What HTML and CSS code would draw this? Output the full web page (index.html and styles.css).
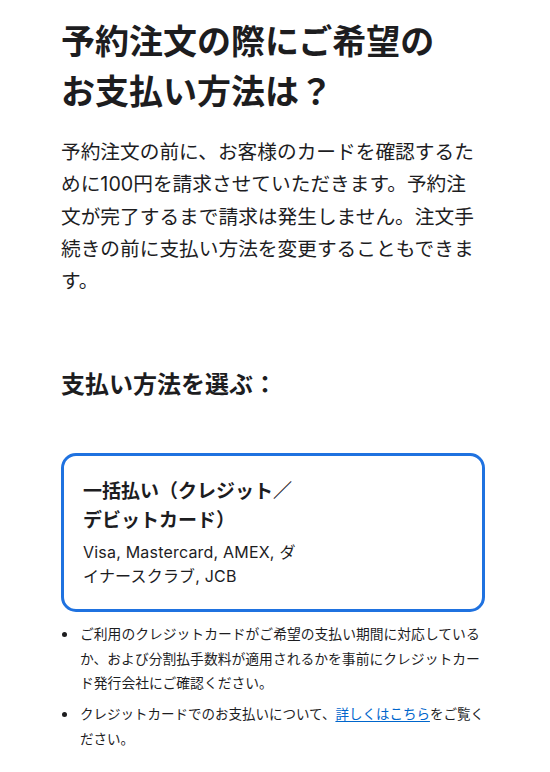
FILE: index.html
```html
<!DOCTYPE html>
<html lang="ja">
<head>
<meta charset="utf-8">
<title>お支払い方法</title>
<link rel="stylesheet" href="styles.css">
</head>
<body>
<main class="page">
  <h1 class="title">予約注文の際にご希望のお支払い方法は？</h1>
  <p class="lead">予約注文の前に、お客様のカードを確認するために100円を請求させていただきます。予約注文が完了するまで請求は発生しません。注文手続きの前に支払い方法を変更することもできます。</p>
  <h2 class="section-title">支払い方法を選ぶ：</h2>
  <div class="option">
    <div class="option-text">
      <div class="option-name">一括払い（クレジット／デビットカード）</div>
      <div class="option-desc">Visa, Mastercard, AMEX, ダイナースクラブ, JCB</div>
    </div>
  </div>
  <ul class="notes">
    <li class="note"><span class="note-text">ご利用のクレジットカードがご希望の支払い期間に対応しているか、および分割払手数料が適用されるかを事前にクレジットカード発行会社にご確認ください。</span></li>
    <li class="note note-tight"><span class="note-text">クレジットカードでのお支払いについて、<a class="link" href="#">詳しくはこちら</a>をご覧ください。</span></li>
  </ul>
</main>
</body>
</html>
```

FILE: styles.css
```css
html, body {
  margin: 0;
  padding: 0;
  background: #ffffff;
}

body {
  font-family: "Inter", "Noto Sans CJK JP", sans-serif;
  color: #1d1d1f;
}

.page {
  padding: 17px 65px 0 61px;
}

.title {
  margin: 0;
  max-width: 390px;
  font-size: 34px;
  line-height: 50px;
  font-weight: 700;
  color: #1d1d1f;
}

.lead {
  margin: 19px 0 0;
  font-size: 19.7px;
  line-height: 32.3px;
  font-weight: 400;
}

.section-title {
  margin: 70px 0 0;
  font-size: 24px;
  line-height: 36px;
  font-weight: 700;
}

.option {
  margin-top: 50px;
  border: 3px solid #1f72e0;
  border-radius: 15px;
  padding: 21px 19px 21px;
}

.option-text {
  max-width: 214px;
}

.option-name {
  font-size: 19px;
  line-height: 29px;
  font-weight: 700;
}

.option-desc {
  margin-top: 5px;
  font-size: 16px;
  line-height: 24px;
  letter-spacing: 0.2px;
  color: #1d1d1f;
}

.notes {
  list-style: none;
  margin: 10px -5px 0 0;
  padding: 0;
}

.note {
  display: flex;
  font-size: 13.8px;
  line-height: 24.5px;
}

.note + .note {
  margin-top: 6.5px;
}

.note::before {
  content: "";
  flex: 0 0 5px;
  width: 5px;
  height: 5px;
  border-radius: 50%;
  background: #1d1d1f;
  margin: 10px 13px 0 1px;
}

.note-tight {
  font-size: 13.5px;
}

.link {
  color: #0066cc;
  text-decoration: underline;
  text-underline-offset: 2px;
}
```
